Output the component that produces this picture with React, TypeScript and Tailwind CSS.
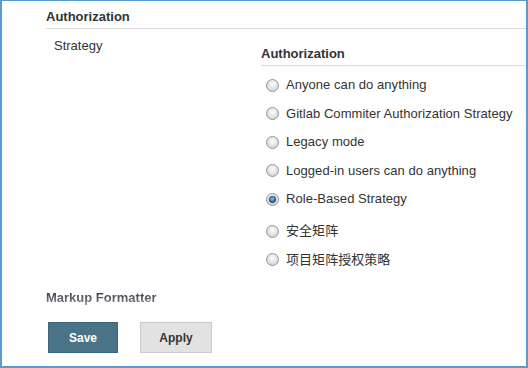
import React from "react";

function Radio({ checked }: { checked?: boolean }) {
  return (
    <svg width="13" height="13" viewBox="0 0 13 13" className="shrink-0">
      <defs>
        <radialGradient id="rg" cx="50%" cy="40%" r="60%">
          <stop offset="0%" stopColor="#ffffff" />
          <stop offset="100%" stopColor="#d0d0d0" />
        </radialGradient>
        <radialGradient id="rb" cx="45%" cy="35%" r="60%">
          <stop offset="0%" stopColor="#7fc3f0" />
          <stop offset="100%" stopColor="#1a5f9a" />
        </radialGradient>
      </defs>
      <circle cx="6.5" cy="6.5" r="6" fill="url(#rg)" stroke="#979797" strokeWidth="1" />
      {checked && <circle cx="6.5" cy="6.5" r="3.2" fill="url(#rb)" stroke="#1d3f5e" strokeWidth="0.8" />}
    </svg>
  );
}

const options: { label: string; h: string; checked?: boolean; mt?: string }[] = [
  { label: "Anyone can do anything", h: "h-[28px]" },
  { label: "Gitlab Commiter Authorization Strategy", h: "h-[29px]" },
  { label: "Legacy mode", h: "h-[28px]" },
  { label: "Logged-in users can do anything", h: "h-[29px]" },
  { label: "Role-Based Strategy", h: "h-[28px]", checked: true },
  { label: "安全矩阵", h: "h-[28px]", mt: "mt-[4px]" },
  { label: "项目矩阵授权策略", h: "h-[29px]" },
];

export default function App() {
  return (
    <div
      className="w-[528px] h-[368px] border-t border-l-2 border-r-2 border-b-2 border-[#5b9bd5] bg-white text-[13px] leading-[16px] text-[#333] overflow-hidden"
      style={{ fontFamily: '"Liberation Sans", Arial, "Noto Sans CJK SC", sans-serif' }}
    >
      <div className="ml-[44px] pt-[8px] pb-[3px] border-b border-[#dcdcdc] font-bold">Authorization</div>
      <div className="flex ml-[44px]">
        <div className="w-[215px] pl-[8px] pt-[9px]">Strategy</div>
        <div className="flex-1 pt-[17px]">
          <div className="pb-[3px] border-b border-[#dcdcdc] font-bold">Authorization</div>
          <div className="pt-[5px]">
            {options.map((o) => (
              <div key={o.label} className={`flex items-center ${o.h} ${o.mt ?? ""} pl-[5px]`}>
                <Radio checked={o.checked} />
                <span className="ml-[7px] whitespace-nowrap tracking-[0.05px]">{o.label}</span>
              </div>
            ))}
          </div>
        </div>
      </div>
      <div className="ml-[44px] mt-[16px] font-bold">
        <span className="bg-gradient-to-b from-[#2a2a3a] to-[#8a8a94] bg-clip-text text-transparent">Markup Formatter</span>
      </div>
      <div className="flex ml-[46px] mt-[16px] gap-[22px]">
        <button className="w-[70px] h-[31px] bg-[#4a7388] border border-[#3e6679] text-white font-bold text-[12px]">
          Save
        </button>
        <button className="w-[72px] h-[31px] bg-[#e2e2e2] border border-[#c9c9c9] text-[#333] font-bold text-[12px]">
          Apply
        </button>
      </div>
    </div>
  );
}
